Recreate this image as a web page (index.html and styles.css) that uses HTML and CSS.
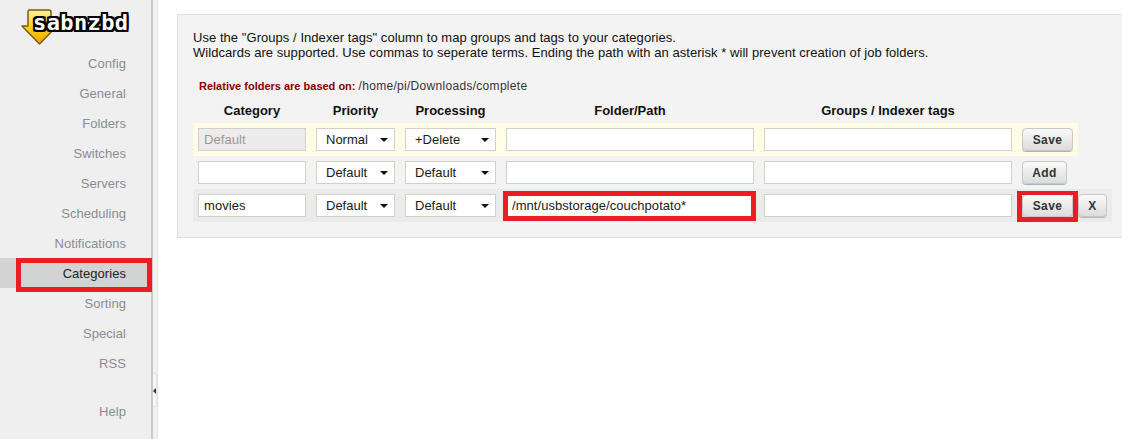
FILE: index.html
```html
<!DOCTYPE html>
<html lang="en">
<head>
<meta charset="utf-8">
<title>SABnzbd Categories</title>
<link rel="stylesheet" href="styles.css">
</head>
<body>
<div class="page">
  <aside class="sidebar">
    <div class="logo">
      <svg class="logo-arrow" width="38" height="38" viewBox="0 0 38 38">
        <defs>
          <linearGradient id="g" x1="0" y1="0" x2="0" y2="1">
            <stop offset="0" stop-color="#fff3a0"/>
            <stop offset="0.5" stop-color="#ffd21a"/>
            <stop offset="1" stop-color="#e8a400"/>
          </linearGradient>
        </defs>
        <path d="M8 2H28C29 2 30 3 30 4V18H36L18.500 36L1 18H7V4C7 3 7 2 8 2Z" fill="url(#g)" stroke="#7a5a10" stroke-width="1.500" stroke-linejoin="round"/>
      </svg>
      <span class="logo-text">sabnzbd</span>
    </div>
    <nav class="nav">
      <a class="nav-item">Config</a>
      <a class="nav-item">General</a>
      <a class="nav-item">Folders</a>
      <a class="nav-item">Switches</a>
      <a class="nav-item">Servers</a>
      <a class="nav-item">Scheduling</a>
      <a class="nav-item">Notifications</a>
      <a class="nav-item active">Categories</a>
      <a class="nav-item">Sorting</a>
      <a class="nav-item">Special</a>
      <a class="nav-item">RSS</a>
      <a class="nav-item help">Help</a>
    </nav>
    <div class="hl hl-nav"></div>
  </aside>
  <div class="splitter"><span class="handle"></span></div>
  <main class="main">
    <section class="panel">
      <p class="intro">Use the "Groups / Indexer tags" column to map groups and tags to your categories.<br>Wildcards are supported. Use commas to seperate terms. Ending the path with an asterisk * will prevent creation of job folders.</p>
      <p class="relative"><strong>Relative folders are based on:</strong> <span class="relative-path">/home/pi/Downloads/complete</span></p>
      <div class="row head">
        <div class="c-cat">Category</div>
        <div class="c-pri">Priority</div>
        <div class="c-pro">Processing</div>
        <div class="c-path">Folder/Path</div>
        <div class="c-tags">Groups / Indexer tags</div>
      </div>
      <div class="row yellow">
        <input class="field c-cat disabled" value="Default" disabled>
        <div class="select c-pri">Normal</div>
        <div class="select c-pro">+Delete</div>
        <input class="field c-path">
        <input class="field c-tags">
        <button class="btn b-save">Save</button>
      </div>
      <div class="row plain">
        <input class="field c-cat">
        <div class="select c-pri">Default</div>
        <div class="select c-pro">Default</div>
        <input class="field c-path">
        <input class="field c-tags">
        <button class="btn b-add">Add</button>
      </div>
      <div class="row grey">
        <input class="field c-cat" value="movies">
        <div class="select c-pri">Default</div>
        <div class="select c-pro">Default</div>
        <div class="hl-wrap c-path"><input class="field full" value="/mnt/usbstorage/couchpotato*"><div class="hl hl-path"></div></div>
        <input class="field c-tags">
        <div class="hl-wrap b-save"><button class="btn full">Save</button><div class="hl hl-save"></div></div>
        <button class="btn b-x">X</button>
      </div>
    </section>
  </main>
</div>
</body>
</html>
```

FILE: styles.css
```css
* { box-sizing: border-box; }
html, body { margin: 0; height: 100%; overflow: hidden; }
body { font-family: "Liberation Sans", Arial, sans-serif; background: #fff; color: #111; }
.page { display: flex; height: 439px; }

.sidebar { width: 151px; background: #efefef; position: relative; flex: none; }
.logo { height: 48px; position: relative; }
.logo-arrow { position: absolute; left: 21px; top: 8px; }
.logo-text {
  position: absolute; left: 33px; top: 10px;
  font-family: "DejaVu Sans Mono", monospace; font-weight: 700; font-size: 22px; line-height: 26px;
  letter-spacing: 0.400px; color: #fff;
  text-shadow: 2px 0 0 #000, -2px 0 0 #000, 0 2px 0 #000, 0 -2px 0 #000, 2px 2px 0 #000, -2px -2px 0 #000, 2px -2px 0 #000, -2px 2px 0 #000;
}
.nav { display: flex; flex-direction: column; }
.nav-item { height: 30px; padding: 2px 25px 0 0; line-height: 28px; text-align: right; font-size: 13px; letter-spacing: 0.050px; color: #8a8c92; }
.nav-item.active { background: #d3d3d3; color: #222; }
.nav-item.help { margin-top: 18px; }

.splitter { width: 7px; flex: none; background: #f2f2f2; border-left: 2px solid #c9c9c9; border-right: 1px solid #e4e4e4; position: relative; }
.handle { position: absolute; left: 0; top: 373px; width: 4px; height: 34px; background: #f8f8f8; border: 1px solid #e4e4e4; border-left: 0; border-radius: 0 3px 3px 0; }
.handle::before { content: ""; position: absolute; left: 0; top: 14px; border-style: solid; border-width: 3px 3px 3px 0; border-color: transparent #333 transparent transparent; }

.main { flex: 1; padding: 14px 0 0 19px; min-width: 0; }
.panel { height: 224px; background: #f3f3f3; border: 1px solid #dfdfdf; border-right: 0; padding: 15px 0 0 15px; }
.intro { margin: 0; font-size: 13px; letter-spacing: 0.050px; line-height: 15px; color: #111; white-space: nowrap; }
.relative { margin: 19px 0 0 6px; font-size: 11px; line-height: 14px; color: #333; }
.relative strong { color: #8b0000; }
.relative-path { font-size: 12px; letter-spacing: 0.300px; }

.row { display: flex; gap: 10px; padding: 5px; height: 33px; align-items: stretch; width: max-content; }
.row.head { height: 30px; padding-top: 9px; padding-bottom: 0; font-size: 13px; font-weight: 700; line-height: 18px; text-align: center; color: #111; }
.row.yellow { background: #fffde6; }
.row.grey { background: #ebebeb; }
.c-cat { width: 108px; }
.c-pri { width: 79px; }
.c-pro { width: 91px; }
.c-path, .c-tags { width: 248px; }

.field { height: 23px; border: 1px solid #d4d0c8; background: #fff; padding: 0 5px; font: 13px "Liberation Sans", Arial, sans-serif; color: #1a1a1a; outline: 0; letter-spacing: 0.050px; }
.field.disabled { background: #ececec; color: #999; }
.full { width: 100%; }

.select { height: 23px; border: 1px solid #d4d0c8; background: #fff; padding-left: 9px; font-size: 13px; line-height: 21px; color: #1a1a1a; position: relative; }
.select::after { content: ""; position: absolute; right: 6px; top: 9px; border-style: solid; border-width: 4px 4px 0; border-color: #111 transparent transparent; }

.btn { height: 23px; padding: 0; border: 1px solid #c8c8c8; border-radius: 4px; background: linear-gradient(#fafafa, #dcdcdc); font: 700 12px "Liberation Sans", Arial, sans-serif; letter-spacing: 0.400px; color: #333; box-shadow: 0 1px 0 #b4b4b4; }
.b-save { width: 51px; }
.b-add { width: 45px; }
.b-x { width: 29px; margin-left: -5px; }

.hl-wrap { position: relative; height: 23px; }
.hl { position: absolute; border: 5px solid #ed1c24; pointer-events: none; }
.hl-nav { left: 16px; top: 258px; width: 136px; height: 34px; z-index: 2; }
.hl-path { left: -3px; top: -3px; width: 253px; height: 30px; }
.hl-save { left: -5px; top: -3px; width: 61px; height: 31px; border-top-width: 4px; }
```
